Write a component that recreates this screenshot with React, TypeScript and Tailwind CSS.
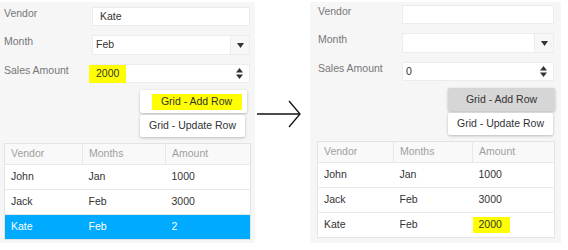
import React from 'react';

type Row = { vendor: string; month: string; amount: string };

interface PanelProps {
  vendor: string;
  month: string;
  amount: string;
  amountMarked?: boolean;
  addPressed?: boolean;
  addMarked?: boolean;
  rows: Row[];
  selectedRow?: number;
  markedCell?: number;
  cols: string[];
  labelClass: string;
  buttonsClass: string;
  className?: string;
}

const font = { fontFamily: '"Liberation Sans", Arial, sans-serif' };

function Caret() {
  return (
    <svg width="7" height="5" viewBox="0 0 7 5">
      <path d="M0 0 L7 0 L3.5 5 Z" fill="#333" />
    </svg>
  );
}

function Spinner() {
  return (
    <svg width="7" height="11" viewBox="0 0 7 11">
      <path d="M0 4.5 L7 4.5 L3.5 0 Z" fill="#333" />
      <path d="M0 6.5 L7 6.5 L3.5 11 Z" fill="#333" />
    </svg>
  );
}

function FormPanel({
  vendor,
  month,
  amount,
  amountMarked,
  addPressed,
  addMarked,
  rows,
  selectedRow,
  markedCell,
  cols,
  labelClass,
  buttonsClass,
  className = '',
}: PanelProps) {
  return (
    <div className={`bg-[#f6f6f7] text-[10.5px] ${className}`}>
      {/* form fields */}
      <div className="flex flex-col gap-[9px]">
        <div className="flex h-[19px] items-center">
          <span className={`${labelClass} -mt-[6px] text-[#777]`}>Vendor</span>
          <div className="flex h-full flex-1 items-center border border-[#ececec] bg-white pl-[7px] text-[#333]">
            {vendor}
          </div>
        </div>
        <div className="flex h-[20px] items-center">
          <span className={`${labelClass} -mt-[6px] text-[#777]`}>Month</span>
          <div className="flex h-full flex-1 border border-[#ececec] bg-white text-[#333]">
            <div className="flex flex-1 items-center pl-[3px]">{month}</div>
            <div className="flex w-[19px] items-center justify-center border-l border-[#ececec] bg-[#f7f7f7]">
              <Caret />
            </div>
          </div>
        </div>
        <div className="flex h-[19px] items-center">
          <span className={`${labelClass} -mt-[6px] text-[#777]`}>Sales Amount</span>
          <div className="flex h-full flex-1 border border-[#ececec] bg-white text-[#333]">
            <div className="flex flex-1 items-center pl-[3px]">
              {amountMarked ? (
                <span className="-ml-[7px] inline-flex h-[18px] w-[37px] items-center bg-[#ffff00] pl-[7px]">
                  {amount}
                </span>
              ) : (
                amount
              )}
            </div>
            <div className="flex w-[19px] items-center justify-center">
              <Spinner />
            </div>
          </div>
        </div>
      </div>

      {/* buttons */}
      <div className={`mt-[7px] flex flex-col items-start gap-[2px] ${buttonsClass}`}>
        <button
          className={`flex h-[23px] w-[107px] items-center justify-center rounded-[2px] text-[#333] shadow-[0_1px_3px_rgba(0,0,0,0.25)] ${
            addPressed ? 'bg-[#d6d6d6]' : 'bg-white'
          }`}
        >
          {addMarked ? (
            <span className="ml-[6px] flex h-[16px] w-[90px] items-center justify-center bg-[#ffff00]">Grid - Add Row</span>
          ) : (
            'Grid - Add Row'
          )}
        </button>
        <button className="flex h-[22px] w-[105px] items-center justify-center rounded-[2px] bg-white text-[#333] shadow-[0_1px_3px_rgba(0,0,0,0.25)]">
          Grid - Update Row
        </button>
      </div>

      {/* grid */}
      <table className="mt-[6px] w-full table-fixed border-collapse border border-[#e3e3e3]">
        <colgroup>
          {cols.map((w, i) => (
            <col key={i} style={{ width: w }} />
          ))}
        </colgroup>
        <thead>
          <tr className="h-[21px] bg-[#f9f9f9] text-left text-[#a0a0a0]">
            <th className="border-r border-[#e8e8e8] pl-[6px] font-normal">Vendor</th>
            <th className="border-r border-[#e8e8e8] pl-[6px] font-normal">Months</th>
            <th className="pl-[6px] font-normal">Amount</th>
          </tr>
        </thead>
        <tbody>
          {rows.map((r, i) => {
            const sel = i === selectedRow;
            return (
              <tr
                key={i}
                className={`h-[25px] border-t border-[#e8e8e8] ${sel ? 'bg-[#00aaff] text-white' : 'bg-white text-[#333]'}`}
              >
                <td className="pl-[6px]">{r.vendor}</td>
                <td className="pl-[6px]">{r.month}</td>
                <td className="pl-0">
                  {markedCell === i ? (
                    <span className="flex h-[16px] w-[37px] items-center bg-[#ffff00] pl-[6px]">{r.amount}</span>
                  ) : (
                    <span className="pl-[6px]">{r.amount}</span>
                  )}
                </td>
              </tr>
            );
          })}
        </tbody>
      </table>
    </div>
  );
}

export default function App() {
  return (
    <div className="flex h-[250px] w-[568px] bg-white" style={font}>
      <FormPanel
        className="mt-[2px] h-[241px] w-[255px] pl-[4px] pr-[5px] pt-[5px]"
        labelClass="w-[88px]"
        buttonsClass="pl-[136px]"
        vendor="Kate"
        month="Feb"
        amount="2000"
        amountMarked
        addMarked
        rows={[
          { vendor: 'John', month: 'Jan', amount: '1000' },
          { vendor: 'Jack', month: 'Feb', amount: '3000' },
          { vendor: 'Kate', month: 'Feb', amount: '2' },
        ]}
        selectedRow={2}
        cols={['78px', '83px', '85px']}
      />

      {/* arrow */}
      <div className="w-[55px] pt-[99px]">
        <svg width="55" height="30" viewBox="0 0 55 30">
          <path d="M2 15 L45 15" stroke="#111" strokeWidth="1.3" fill="none" />
          <path d="M34 2 L45 15 L34 28" stroke="#111" strokeWidth="1.3" fill="none" />
        </svg>
      </div>

      <FormPanel
        className="mt-[2px] h-[241px] w-[251px] px-[7px] pt-[3px]"
        labelClass="w-[85px] pl-[1px]"
        buttonsClass="pl-[131px]"
        vendor=""
        month=""
        amount="0"
        addPressed
        rows={[
          { vendor: 'John', month: 'Jan', amount: '1000' },
          { vendor: 'Jack', month: 'Feb', amount: '3000' },
          { vendor: 'Kate', month: 'Feb', amount: '2000' },
        ]}
        markedCell={2}
        cols={['76px', '79px', '82px']}
      />
    </div>
  );
}
